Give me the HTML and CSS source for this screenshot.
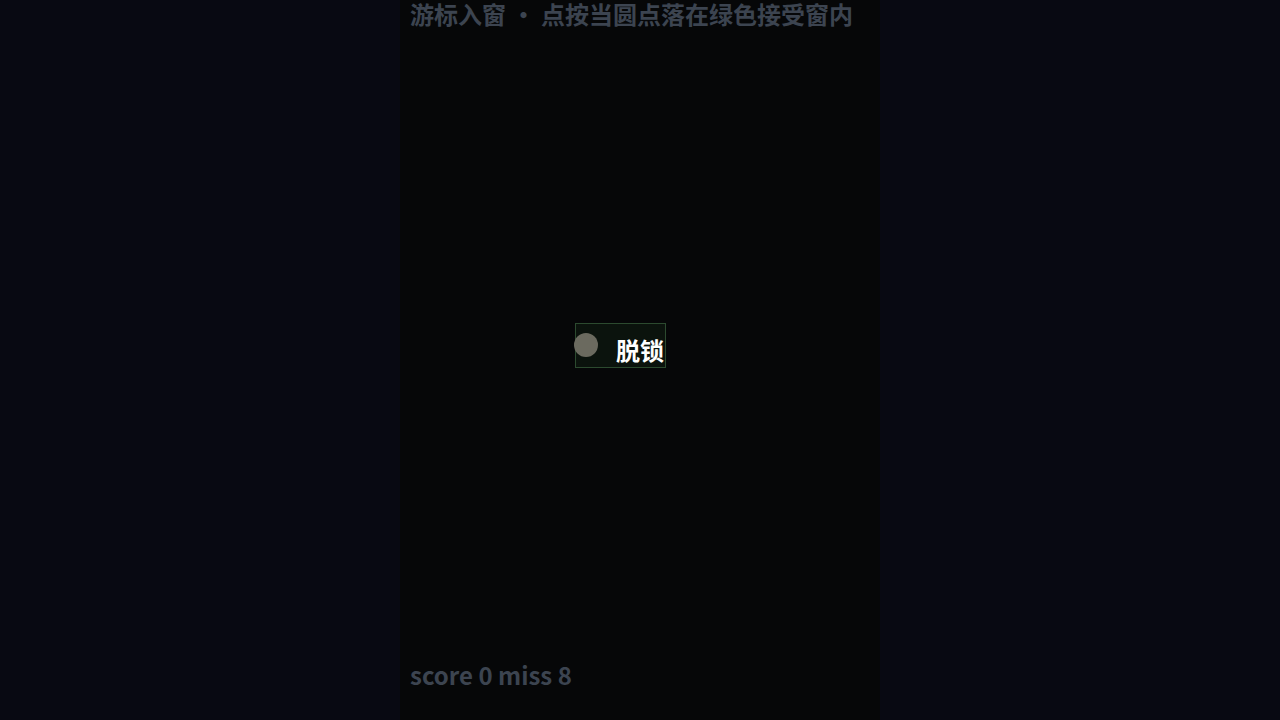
FILE: index.html
```html
<!DOCTYPE html>
<html lang="zh-CN">
    <head>
        <meta charset="UTF-8" />
        <meta name="viewport" content="width=device-width, initial-scale=1.0" />
        <title>游标入窗</title>
        <link rel="stylesheet" href="styles.css">
    </head>
    <body>
        <main id="game">
            <header class="hint">游标入窗 ・ 点按当圆点落在绿色接受窗内</header>
            <div class="stage">
                <!--accept window-->
                <div class="window">
                    <span class="window-label">脱锁</span>
                </div>
                <!--cursor dot-->
                <div class="cursor"></div>
            </div>
            <footer class="stats">score 0 miss 8</footer>
        </main>
    </body>
</html>
```

FILE: styles.css
```css
/* Cursor window game */
:root {
    --page: #080912;
    --panel: #060708;
    --muted: #3c4450;
    --accept: #2c4a2f;
}
body {
    margin: 0;
    height: 100vh;
    overflow: hidden;
    background-color: var(--page);
    font-family: "Noto Sans CJK SC", "Noto Sans", sans-serif;
    display: flex;
    justify-content: center;
}
#game {
    width: 480px;
    height: 100vh;
    background-color: var(--panel);
    display: flex;
    flex-direction: column;
    box-sizing: border-box;
    padding: 0 10px;
}
.hint {
    color: var(--muted);
    font-size: 24px;
    font-weight: 700;
    line-height: 28px;
    height: 30px;
    white-space: nowrap;
}
.stage {
    flex: 1;
    position: relative;
}
.window {
    position: absolute;
    left: 165px;
    top: 293px;
    width: 89px;
    height: 43px;
    border: 1px solid var(--accept);
    background-color: #0b130d;
    display: flex;
    align-items: flex-end;
    justify-content: flex-end;
}
.window-label {
    color: #fff;
    font-size: 24px;
    font-weight: 700;
    line-height: 32px;
    margin-right: 1px;
    margin-bottom: 1px;
}
.cursor {
    position: absolute;
    left: 164px;
    top: 303px;
    width: 24px;
    height: 24px;
    border-radius: 50%;
    background-color: #6b6a5f;
}
.stats {
    color: var(--muted);
    font-size: 24px;
    font-weight: 700;
    line-height: 30px;
    padding-bottom: 30px;
}
```
